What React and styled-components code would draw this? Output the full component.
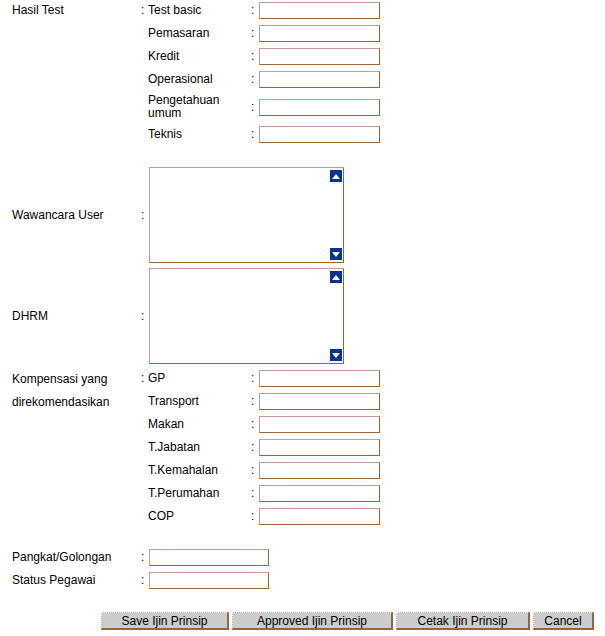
import React from "react";
import styled, { createGlobalStyle } from "styled-components";

const GlobalStyle = createGlobalStyle`
  html, body {
    margin: 0;
    padding: 0;
    background: #ffffff;
  }
  body {
    font-family: Tahoma, "Liberation Sans", Arial, sans-serif;
    font-size: 12px;
    color: #000000;
  }
`;

const Page = styled.div`
  width: 605px;
  padding: 0 0 0 12px;
  box-sizing: border-box;
`;

const Section = styled.div`
  display: grid;
  grid-template-columns: 129px 7px 1fr;
  align-items: ${(p) => (p.$center ? "center" : "start")};
  margin-top: ${(p) => p.$top || 0}px;
`;

const Label = styled.div`
  line-height: ${(p) => p.$lh || 21}px;
`;

const Colon = styled.div`
  line-height: 21px;
  &::before {
    content: ":";
  }
`;

const SubList = styled.div`
  display: flex;
  flex-direction: column;
  gap: 2px;
`;

const SubRow = styled.div`
  display: grid;
  grid-template-columns: 103px 8px 121px;
  align-items: center;
  min-height: ${(p) => p.$h || 21}px;
`;

const SubLabel = styled.div`
  line-height: 13px;
`;

const Input = styled.input`
  box-sizing: border-box;
  width: ${(p) => p.$w || 121}px;
  height: 17px;
  margin: 0 0 0 ${(p) => p.$ml || 0}px;
  padding: 0 2px;
  border-style: solid;
  border-width: 1px;
  border-color: #cc9999 #996633 #996633 #cc9999;
  background: #ffffff;
  font: inherit;
  outline: none;
`;

const AreaBox = styled.div`
  box-sizing: border-box;
  width: 195px;
  height: 96px;
  margin-left: 1px;
  display: flex;
  border-style: solid;
  border-width: 1px;
  border-color: #cc9999 #996633 #996633 #cc9999;
  background: #ffffff;
`;

const AreaText = styled.textarea`
  flex: 1;
  border: none;
  resize: none;
  outline: none;
  margin: 0;
  padding: 2px;
  font: inherit;
  overflow: hidden;
`;

const Scroll = styled.div`
  width: 12px;
  margin: 2px 1px 2px 0;
  display: flex;
  flex-direction: column;
  justify-content: space-between;
`;

const Arrow = styled.div`
  width: 12px;
  height: 12px;
  background: #003399;
  display: flex;
  align-items: center;
  justify-content: center;
`;

const Buttons = styled.div`
  display: flex;
  justify-content: flex-end;
  gap: 3px;
  margin-top: 21px;
  padding-right: 11px;
`;

const Button = styled.button`
  box-sizing: border-box;
  width: ${(p) => p.$w}px;
  height: 18px;
  margin: 0;
  padding: 0;
  font: inherit;
  color: #000000;
  border-style: dotted solid solid dotted;
  border-width: 1px 2px 2px 1px;
  border-color: #ffffff #996633 #996633 #ffffff;
  background-color: #cccccc;
  background-image: linear-gradient(#cc9999, #cc9999),
    linear-gradient(#cc9999, #cc9999);
  background-size: 100% 1px, 1px 100%;
  background-position: top left, top left;
  background-repeat: no-repeat;
  background-origin: border-box;
  background-clip: border-box;
  cursor: pointer;
`;

function ArrowIcon({ down }) {
  return (
    <svg width="8" height="5" viewBox="0 0 8 5">
      <polygon
        points={down ? "0,0 8,0 4,5" : "4,0 8,5 0,5"}
        fill="#ffffff"
      />
    </svg>
  );
}

function TextBox() {
  return (
    <AreaBox>
      <AreaText />
      <Scroll>
        <Arrow>
          <ArrowIcon />
        </Arrow>
        <Arrow>
          <ArrowIcon down />
        </Arrow>
      </Scroll>
    </AreaBox>
  );
}

const tests = [
  ["Test basic"],
  ["Pemasaran"],
  ["Kredit"],
  ["Operasional"],
  ["Pengetahuan umum", 30],
  ["Teknis"],
];

const komp = [
  "GP",
  "Transport",
  "Makan",
  "T.Jabatan",
  "T.Kemahalan",
  "T.Perumahan",
  "COP",
];

export default function App() {
  return (
    <Page>
      <GlobalStyle />
      <Section>
        <Label>Hasil Test</Label>
        <Colon />
        <SubList>
          {tests.map(([t, h]) => (
            <SubRow key={t} $h={h}>
              <SubLabel>{t}</SubLabel>
              <Colon />
              <Input />
            </SubRow>
          ))}
        </SubList>
      </Section>

      <Section $center $top={22}>
        <Label>Wawancara User</Label>
        <Colon />
        <TextBox />
      </Section>

      <Section $center $top={5}>
        <Label>DHRM</Label>
        <Colon />
        <TextBox />
      </Section>

      <Section $top={4}>
        <Label $lh={23}>
          Kompensasi yang
          <br />
          direkomendasikan
        </Label>
        <Colon />
        <SubList>
          {komp.map((t) => (
            <SubRow key={t}>
              <SubLabel>{t}</SubLabel>
              <Colon />
              <Input />
            </SubRow>
          ))}
        </SubList>
      </Section>

      <Section $center $top={20}>
        <Label>Pangkat/Golongan</Label>
        <Colon />
        <Input $w={120} $ml={1} />
      </Section>
      <Section $center $top={2}>
        <Label>Status Pegawai</Label>
        <Colon />
        <Input $w={120} $ml={1} />
      </Section>

      <Buttons>
        <Button $w={128}>Save Ijin Prinsip</Button>
        <Button $w={161}>Approved Ijin Prinsip</Button>
        <Button $w={134}>Cetak Ijin Prinsip</Button>
        <Button $w={61}>Cancel</Button>
      </Buttons>
    </Page>
  );
}
